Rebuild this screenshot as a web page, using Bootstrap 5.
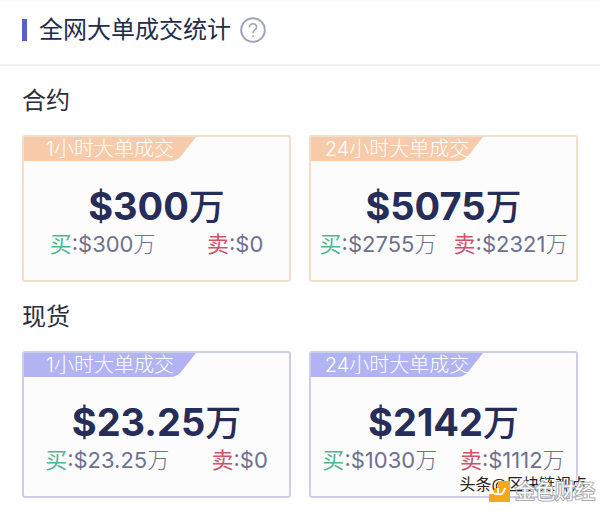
<!DOCTYPE html>
<html lang="zh-CN">
<head>
<meta charset="utf-8">
<meta name="viewport" content="width=device-width, initial-scale=1">
<title>全网大单成交统计</title>
<link rel="stylesheet" href="https://cdn.jsdelivr.net/npm/bootstrap@5.3.0/dist/css/bootstrap.min.css">
<style>
body { font-family: Inter, "Noto Sans CJK SC", sans-serif; color: #242c4c; background: #fff; overflow-x: hidden; }
.page-head { padding: 11px 22px 17px; border-bottom: 2px solid #f1f1f3; border-top: 2px solid #fafafb; }
.page-title { font-size: 24px; line-height: 34px; font-weight: 400; }
.accent { width: 5px; height: 22px; background: #5560c8; margin-right: 12px; }
.help { margin-left: 9px; color: #a0a3b3; }
.content-area { padding: 18px 22px 0; }
.group-title { font-size: 24px; line-height: 34px; margin-bottom: 17px; font-weight: 400; color: #2b2e3d; }
.group + .group { margin-top: 18px; }
.group .row { --bs-gutter-x: 18px; }
.stat { --edge: #efdfcf; --tab: #f7cbaa; height: 147px; border: 2px solid var(--edge); border-radius: 3px; background: #fdfcfd; }
.spot .stat { --edge: #cccde6; --tab: #b1b3f3; }
.tab-label { width: 172px; height: 24px; color: #fff; font-size: 20px; line-height: 24px; font-weight: 300; }
.tab-label svg { color: var(--tab); }
.total { font-size: 38px; line-height: 46px; font-weight: 700; margin-top: 22px; color: #252d58; white-space: nowrap; }
.total .unit { font-size: 36px; font-weight: 500; line-height: 1; }
.sides { font-size: 22px; line-height: 30px; color: #6d718d; white-space: nowrap; }
.sides .unit { font-size: 22px; font-weight: 300; line-height: 1; }
.sides .buy, .sides .sell { font-weight: 400; }
.buy { color: #4fb693; }
.sell { color: #cf5269; }
.source { right: 13px; bottom: 10px; font-size: 16px; line-height: 24px; color: #222; text-shadow: 1px 1px #fff, -1px -1px #fff; }
.brand { right: 5px; bottom: 2px; }
.brand-name { font-size: 20px; line-height: 24px; color: #fff; -webkit-text-stroke: 2px #aaa; paint-order: stroke fill; }
</style>
<script defer src="https://cdn.jsdelivr.net/npm/bootstrap@5.3.0/dist/js/bootstrap.bundle.min.js"></script>
</head>
<body>
<div class="position-relative pb-2">
<header class="page-head d-flex align-items-center">
<span class="accent"></span>
<h1 class="page-title mb-0">全网大单成交统计</h1>
<button type="button" class="help btn p-0 border-0 d-flex" aria-label="说明">
<svg width="26" height="26" viewBox="0 0 26 26" fill="none" stroke="currentColor"><circle cx="13" cy="13" r="11.8" stroke-width="2"/><path d="M9.4 10.4C9.4 5.6 16.6 5.6 16.6 10.1C16.6 13 13 12.7 13 16.2" stroke-width="1.6"/><circle cx="13" cy="19.2" r=".6" fill="currentColor" stroke-width=".8"/></svg>
</button>
</header>
<main class="content-area">
<section class="group">
<h2 class="group-title">合约</h2>
<div class="row">
<div class="col-6"><article class="stat">
<div class="tab-label position-relative text-center"><svg class="position-absolute top-0 start-0" width="172" height="24" viewBox="0 0 172 24"><path d="M0 0H172L157 19Q153 24 146 24H0Z" fill="currentColor"/></svg><span class="position-relative">1小时大单成交</span></div>
<div class="total text-center">$300<span class="unit">万</span></div>
<div class="sides d-flex justify-content-around"><span><span class="unit buy">买</span>:$300<span class="unit">万</span></span><span><span class="unit sell">卖</span>:$0</span></div>
</article></div>
<div class="col-6"><article class="stat">
<div class="tab-label position-relative text-center"><svg class="position-absolute top-0 start-0" width="172" height="24" viewBox="0 0 172 24"><path d="M0 0H172L157 19Q153 24 146 24H0Z" fill="currentColor"/></svg><span class="position-relative">24小时大单成交</span></div>
<div class="total text-center">$5075<span class="unit">万</span></div>
<div class="sides d-flex justify-content-around"><span><span class="unit buy">买</span>:$2755<span class="unit">万</span></span><span><span class="unit sell">卖</span>:$2321<span class="unit">万</span></span></div>
</article></div>
</div>
</section>
<section class="group spot">
<h2 class="group-title">现货</h2>
<div class="row">
<div class="col-6"><article class="stat">
<div class="tab-label position-relative text-center"><svg class="position-absolute top-0 start-0" width="172" height="24" viewBox="0 0 172 24"><path d="M0 0H172L157 19Q153 24 146 24H0Z" fill="currentColor"/></svg><span class="position-relative">1小时大单成交</span></div>
<div class="total text-center">$23.25<span class="unit">万</span></div>
<div class="sides d-flex justify-content-around"><span><span class="unit buy">买</span>:$23.25<span class="unit">万</span></span><span><span class="unit sell">卖</span>:$0</span></div>
</article></div>
<div class="col-6"><article class="stat">
<div class="tab-label position-relative text-center"><svg class="position-absolute top-0 start-0" width="172" height="24" viewBox="0 0 172 24"><path d="M0 0H172L157 19Q153 24 146 24H0Z" fill="currentColor"/></svg><span class="position-relative">24小时大单成交</span></div>
<div class="total text-center">$2142<span class="unit">万</span></div>
<div class="sides d-flex justify-content-around"><span><span class="unit buy">买</span>:$1030<span class="unit">万</span></span><span><span class="unit sell">卖</span>:$1112<span class="unit">万</span></span></div>
</article></div>
</div>
</section>
</main>
<div class="source position-absolute">头条@区块链视点</div>
<div class="brand position-absolute d-flex align-items-center gap-1">
<svg width="22" height="22" viewBox="0 0 22 22"><path d="M9 0H21V21H0V13H5V7H9Z" fill="#f5a81c"/><path d="M9 7V13Q14 15 16 7M5 13H9" fill="none" stroke="#fff" stroke-width="1.8"/></svg>
<span class="brand-name">金色财经</span>
</div>
</div>
</body>
</html>
